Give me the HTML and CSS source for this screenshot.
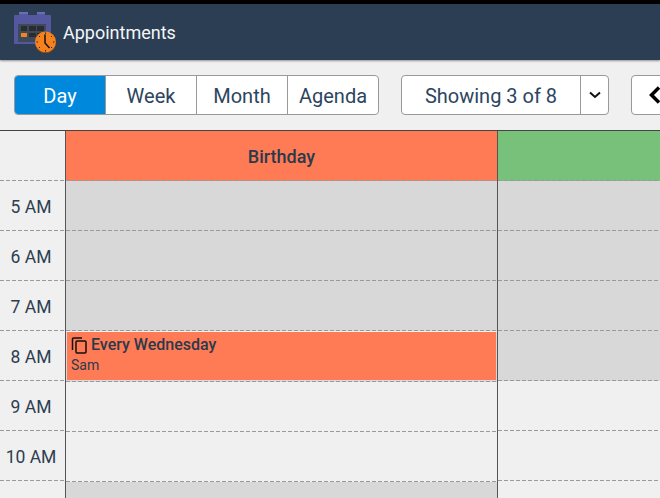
FILE: index.html
```html
<!DOCTYPE html>
<html lang="en">
<head>
  <meta charset="UTF-8" />
  <meta name="viewport" content="width=device-width, initial-scale=1" />
  <title>Appointments</title>
  <link rel="stylesheet" href="styles.css">
</head>
<body>

  <header class="app-bar">
    <svg class="app-icon" width="42" height="42" viewBox="0 0 42 42">
      <path d="M1 4h4V1h9v3h9V1h8v3h5a1 1 0 0 1 1 1v27a1 1 0 0 1-1 1H1a1 1 0 0 1-1-1V5a1 1 0 0 1 1-1z" fill="#56589f"/>
      <rect x="5" y="1" width="9" height="2" fill="#6a6cb4"/>
      <rect x="23" y="1" width="8" height="2" fill="#6a6cb4"/>
      <rect x="4" y="13" width="28" height="18" fill="#3d4a5a"/>
      <g fill="#2c2c2e">
        <rect x="7" y="15" width="6" height="5"/>
        <rect x="15" y="15" width="7" height="5"/>
        <rect x="23" y="15" width="7" height="5"/>
        <rect x="15" y="22" width="7" height="4"/>
        <rect x="23" y="22" width="7" height="4"/>
      </g>
      <rect x="7" y="22" width="6" height="4" fill="#f5821f"/>
      <circle cx="31.500" cy="31" r="10.500" fill="#f5821f"/>
      <path d="M23 37.500a10.500 10.500 0 0 0 17 0" fill="none" stroke="#8a4d14" stroke-width="1"/>
      <path d="M31 23.500V32l4.500 5" fill="none" stroke="#151515" stroke-width="1.500"/>
      <g fill="#3a2410">
        <rect x="31" y="21.500" width="1" height="1.500"/>
        <rect x="31" y="39" width="1" height="1.500"/>
        <rect x="22.500" y="30.500" width="1.500" height="1"/>
        <rect x="39" y="30.500" width="1.500" height="1"/>
        <rect x="25" y="25" width="1" height="1"/>
        <rect x="37" y="25" width="1" height="1"/>
        <rect x="25" y="36" width="1" height="1"/>
        <rect x="37" y="36" width="1" height="1"/>
      </g>
    </svg>
    <span class="app-title">Appointments</span>
  </header>

  <div class="toolbar">
    <div class="btn-group views">
      <button class="btn active">Day</button>
      <button class="btn">Week</button>
      <button class="btn">Month</button>
      <button class="btn">Agenda</button>
    </div>
    <div class="btn-group filter">
      <button class="btn showing">Showing 3 of 8</button>
      <button class="btn caret">
        <svg width="12" height="8" viewBox="0 0 12 8"><path d="M1 1.500 6 6l5-4.500" fill="none" stroke="#111" stroke-width="2"/></svg>
      </button>
    </div>
    <div class="btn-group pager">
      <button class="btn prev">
        <svg width="12" height="18" viewBox="0 0 12 18"><path d="M10 1.500 2.500 9l7.500 7.500" fill="none" stroke="#000" stroke-width="3.500"/></svg>
      </button>
    </div>
  </div>

  <div class="calendar">
    <div class="col times">
      <div class="col-head"></div>
      <div class="slot">5 AM</div>
      <div class="slot">6 AM</div>
      <div class="slot">7 AM</div>
      <div class="slot">8 AM</div>
      <div class="slot">9 AM</div>
      <div class="slot">10 AM</div>
      <div class="slot"></div>
    </div>

    <div class="col">
      <div class="col-head birthday">Birthday</div>
      <div class="slot busy"></div>
      <div class="slot busy"></div>
      <div class="slot busy"></div>
      <div class="slot busy">
        <div class="event">
          <div class="event-title">
            <svg width="17" height="17" viewBox="0 0 17 17"><path d="M11 1H2.500A1 1 0 0 0 1.500 2v11" fill="none" stroke="#111" stroke-width="1.500"/><rect x="5" y="4" width="10" height="12" rx="1" fill="none" stroke="#111" stroke-width="1.500"/></svg>
            Every Wednesday
          </div>
          <div class="event-who">Sam</div>
        </div>
      </div>
      <div class="slot"></div>
      <div class="slot"></div>
      <div class="slot busy"></div>
    </div>

    <div class="col">
      <div class="col-head green"></div>
      <div class="slot busy"></div>
      <div class="slot busy"></div>
      <div class="slot busy"></div>
      <div class="slot busy"></div>
      <div class="slot"></div>
      <div class="slot"></div>
      <div class="slot"></div>
    </div>
  </div>

</body>
</html>
```

FILE: styles.css
```css
* {
  box-sizing: border-box;
}
html, body {
  height: 100%;
}
body {
  margin: 0;
  font-family: Roboto, sans-serif;
  background: #f0f0f0;
  color: #2c3e50;
  overflow: hidden;
  display: flex;
  flex-direction: column;
}

.app-bar {
  flex: none;
  height: 60px;
  border-top: 4px solid #000;
  background: #2b3e54;
  display: flex;
  align-items: center;
  padding-left: 14px;
  box-shadow: 0 1px 2px rgba(0,0,0,0.4);
}
.app-icon {
  flex: none;
  margin-right: 7px;
}
.app-title {
  color: #f4f6f8;
  font-size: 18px;
  padding-top: 1px;
}

.toolbar {
  flex: none;
  height: 70px;
  display: flex;
  align-items: center;
  padding: 0 0 0 14px;
  gap: 22px;
  overflow: hidden;
}
.btn-group {
  display: flex;
  flex: none;
  height: 40px;
  background: #fff;
  border: 1px solid #999;
  border-radius: 4px;
  overflow: hidden;
}
.btn {
  font-family: inherit;
  font-size: 20px;
  color: #2c4560;
  background: transparent;
  border: none;
  border-left: 1px solid #999;
  padding: 2px 0 0;
  display: flex;
  align-items: center;
  justify-content: center;
}
.btn:first-child {
  border-left: none;
}
.views .btn {
  width: 91px;
}
.views .btn:first-child {
  width: 90px;
}
.btn.active {
  background: #0088dd;
  color: #fff;
}
.showing {
  width: 178px;
}
.caret {
  width: 28px;
  padding: 0;
}
.pager {
  width: 60px;
}
.prev {
  width: 100%;
  justify-content: flex-start;
  padding: 0 0 0 17px;
}

.calendar {
  flex: 1;
  min-height: 0;
  overflow: hidden;
  display: grid;
  grid-template-columns: 66px 432px minmax(0, 1fr);
  border-top: 1px solid #444;
}
.col {
  border-right: 1px solid #555;
}
.col:last-child {
  border-right: none;
}

/* riga tratteggiata 4/2 in fondo ad ogni cella */
.col-head, .slot {
  height: 50px;
  background-image: repeating-linear-gradient(90deg, #9a9a9a 0 4px, transparent 4px 6px);
  background-size: 100% 1px;
  background-position: left bottom;
  background-repeat: no-repeat;
}
.col-head {
  display: flex;
  align-items: center;
  justify-content: center;
  padding: 2px 0 1px;
  font-size: 18px;
  font-weight: 500;
  color: #2a3a4c;
}
.birthday {
  background-color: #ff7b55;
}
.green {
  background-color: #78c17b;
}
.busy {
  background-color: #d8d8d8;
}
.times .slot {
  display: flex;
  align-items: center;
  justify-content: center;
  padding: 2px 3px 1px 0;
  font-size: 17.500px;
}

.event {
  height: 48px;
  margin: 1px 1px 0;
  padding: 3px 4px 0;
  background: #ff7b55;
  color: #2a3a4c;
}
.event-title {
  display: flex;
  align-items: center;
  gap: 3px;
  font-size: 16px;
  font-weight: 500;
  line-height: 20px;
}
.event-who {
  font-size: 14px;
  line-height: 20px;
}
```
